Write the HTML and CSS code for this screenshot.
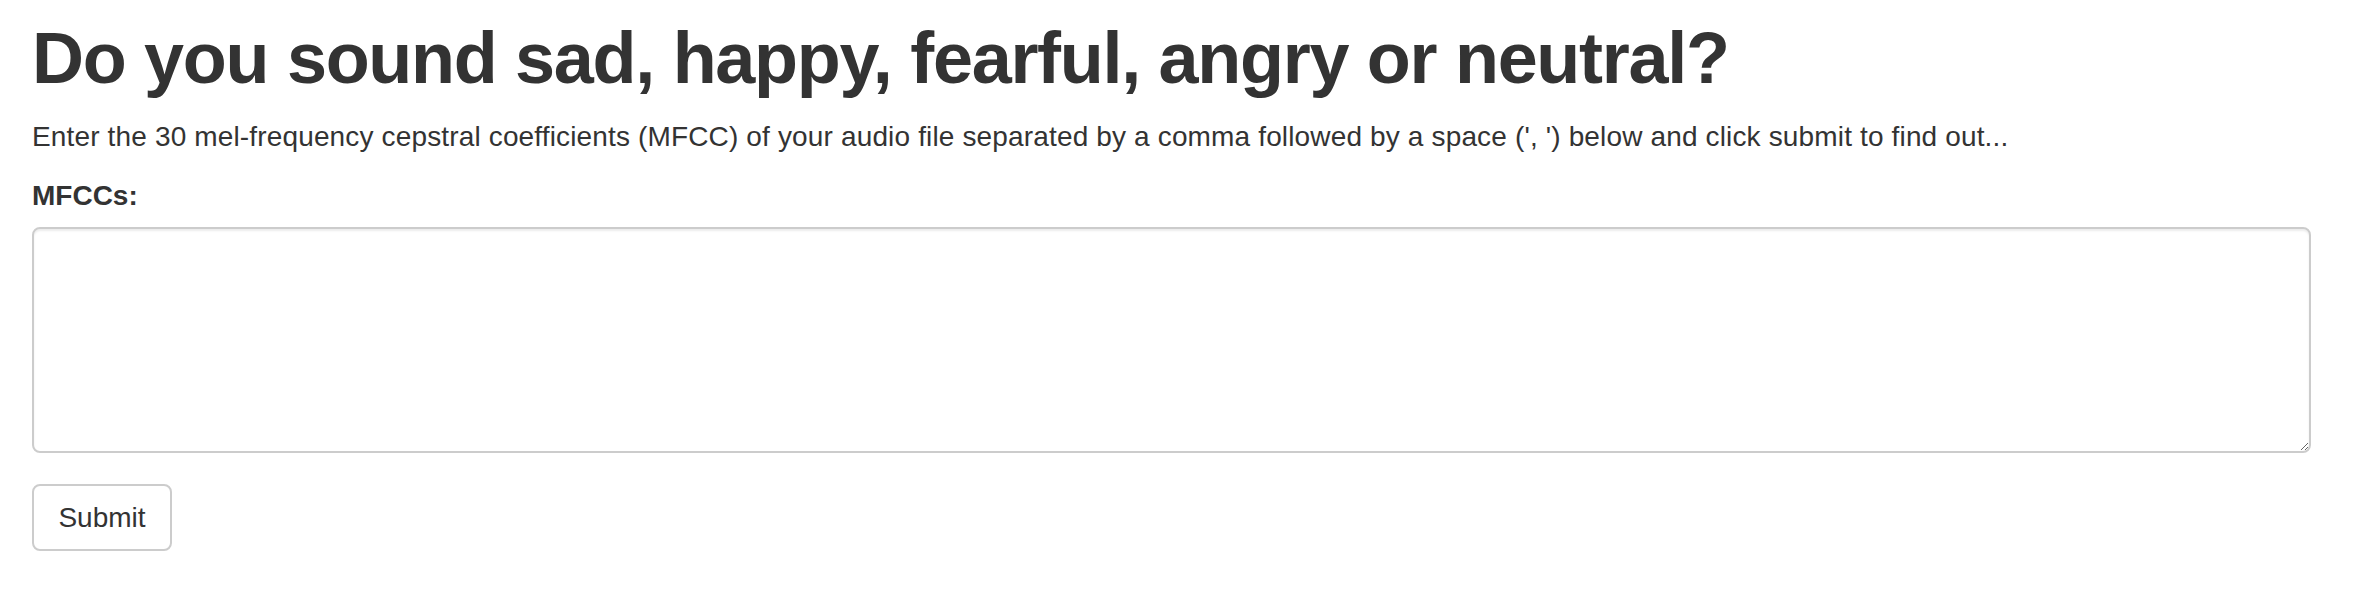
FILE: index.html
```html
<!DOCTYPE html>
<html lang="en">
<head>
<meta charset="utf-8">
<title>Emotion Classifier</title>
<link rel="stylesheet" href="styles.css">
</head>
<body>
<div class="container">
  <h1 class="title">Do you sound sad, happy, fearful, angry or neutral?</h1>
  <p class="lead-text">Enter the 30 mel-frequency cepstral coefficients (MFCC) of your audio file separated by a comma followed by a space (', ') below and click submit to find out...</p>
  <form class="form">
    <label class="label" for="mfcc">MFCCs:</label>
    <textarea class="textarea" id="mfcc" name="mfcc"></textarea>
    <button class="btn" type="submit">Submit</button>
  </form>
</div>
</body>
</html>
```
FILE: styles.css
```css
html, body {
  margin: 0;
  padding: 0;
  background: #fff;
}
body {
  font-family: "Liberation Sans", Arial, Helvetica, sans-serif;
  color: #333;
}
.container {
  padding: 0 59px 0 32px;
  display: flex;
  flex-direction: column;
}
.title {
  margin: 19px 0 0;
  font-size: 72px;
  line-height: 79px;
  font-weight: bold;
  letter-spacing: -1.3px;
  white-space: nowrap;
}
.lead-text {
  margin: 19px 0 0;
  font-size: 28px;
  line-height: 40px;
  letter-spacing: 0.15px;
  white-space: nowrap;
}
.form {
  display: flex;
  flex-direction: column;
  align-items: flex-start;
}
.label {
  margin-top: 19px;
  font-size: 28px;
  line-height: 40px;
  font-weight: bold;
}
.textarea {
  box-sizing: border-box;
  margin-top: 11px;
  width: 100%;
  height: 226px;
  border: 2px solid #ccc;
  border-radius: 8px;
  box-shadow: inset 0 2px 2px rgba(0,0,0,0.075);
  font-family: inherit;
  font-size: 28px;
  padding: 12px 24px;
  resize: vertical;
  outline: none;
}
.btn {
  box-sizing: border-box;
  margin-top: 31px;
  width: 140px;
  height: 67px;
  background: #fff;
  border: 2px solid #ccc;
  border-radius: 8px;
  font-family: inherit;
  font-size: 28px;
  color: #333;
  padding: 0;
}
```
